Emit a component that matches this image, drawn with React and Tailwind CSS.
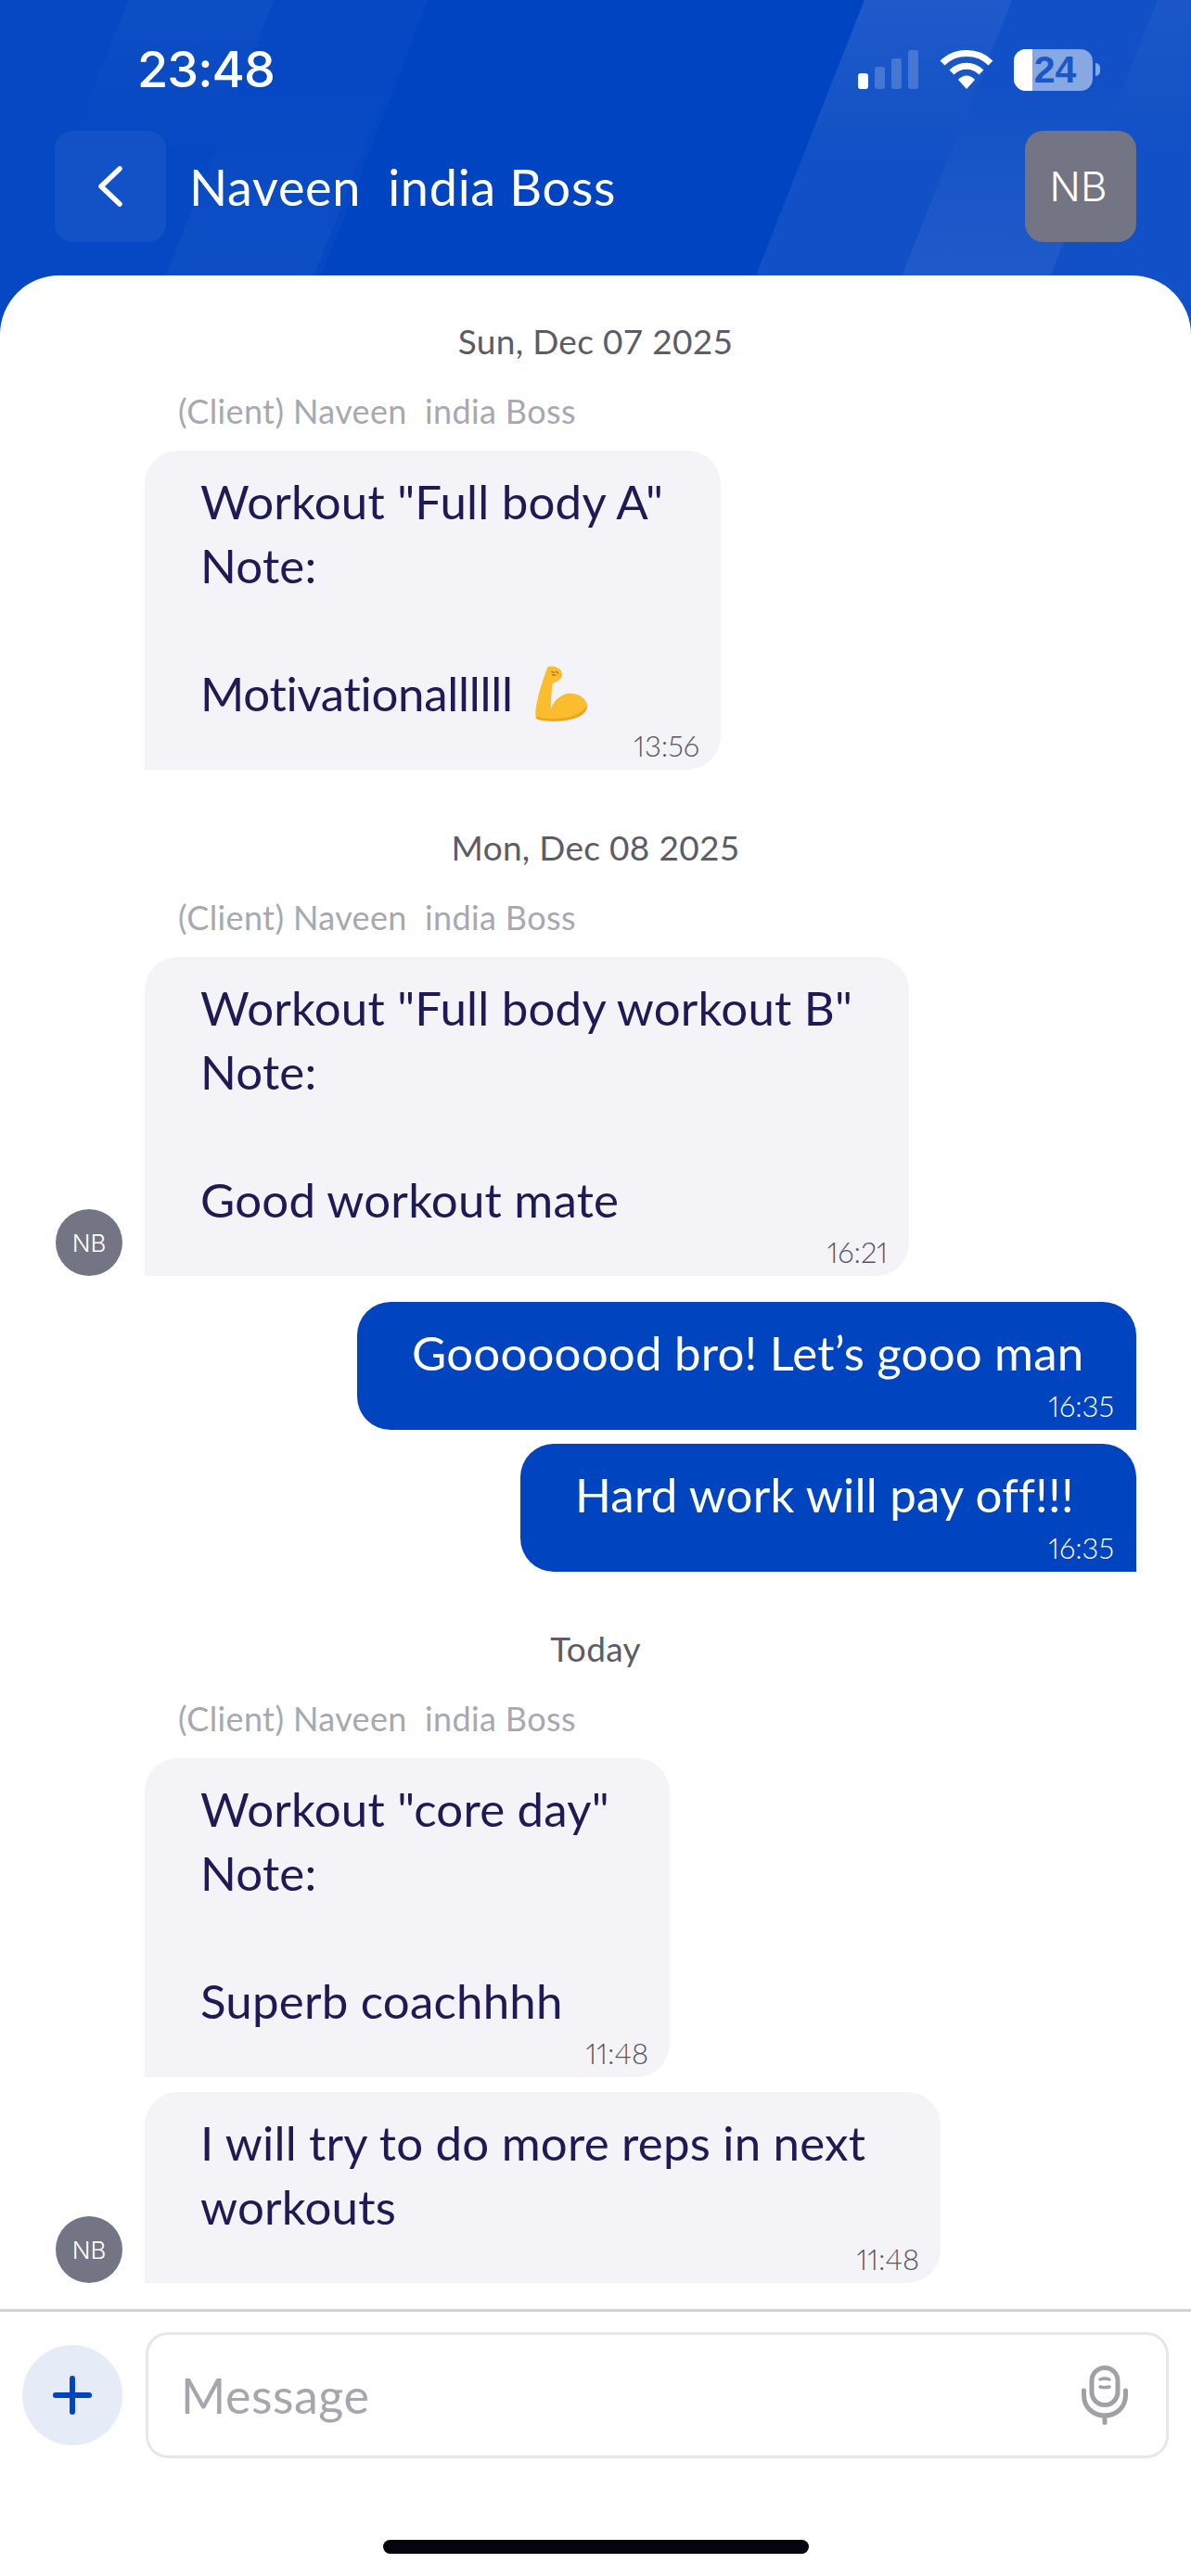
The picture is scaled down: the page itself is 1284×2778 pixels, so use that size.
import React from 'react';
import { Plus } from 'lucide-react';

const bodyFont = "font-['Lato','Noto_Sans',sans-serif]";

const DateLabel = ({ children, className }) => (
  <div className={`text-center text-[37px] tracking-[0.3px] leading-[40px] text-[#5c5c66] ${className}`}>{children}</div>
);

const SenderLabel = ({ className }) => (
  <div className={`pl-[192px] text-[36px] tracking-[0.37px] leading-[40px] text-[#a8a8b0] whitespace-pre ${className}`}>
    (Client) Naveen  india Boss
  </div>
);

const Avatar = () => (
  <div className="w-[72px] h-[72px] rounded-full bg-[#737585] flex items-center justify-center text-white text-[26px] font-light font-['Inter',sans-serif] shrink-0">
    NB
  </div>
);

const MuscleEmoji = () => (
  <svg viewBox="45 48 167 182" className="w-[56px] h-[61px] ml-[24px] shrink-0">
    <path
      d="M85 55C98 48 120 55 127 65C135 78 132 92 120 98C110 104 102 105 100 112C97 135 96 165 95 190C102 170 118 148 150 140C178 138 205 150 212 175C212 200 195 216 155 224C120 232 70 230 50 222C44 215 45 195 50 170C58 130 72 90 85 55Z"
      fill="#fbbc2d"
    />
    <path
      d="M48 214C80 224 125 224 160 214C185 207 203 195 212 178C212 200 195 216 155 224C120 232 70 230 50 222C47 220 47 217 48 214Z"
      fill="#f0a21f"
    />
    <path d="M98 70l8 3M112 70l6 4M100 80l10 1" stroke="#b8691a" strokeWidth="4" strokeLinecap="round" fill="none" />
  </svg>
);

const Received = ({ width, lines, time, avatar, className }) => (
  <div className={`flex items-end pl-[60px] gap-[24px] ${className}`}>
    {avatar ? <Avatar /> : <div className="w-[72px] shrink-0" />}
    <div className={`${width} bg-[#f3f3f8] rounded-[36px] rounded-bl-none pt-[20px] pl-[60px] text-[#1f1a55]`}>
      <div className="text-[51px] tracking-[0.2px] leading-[69px] whitespace-pre">
        {lines.map((l, i) =>
          l.startsWith('Motivational') ? (
            <div key={i} className="h-[69px] flex items-center tracking-[-0.3px]">
              {l}
              <MuscleEmoji />
            </div>
          ) : (
            <div key={i} className="h-[69px]">{l}</div>
          )
        )}
      </div>
      <div className="mt-[6px] mb-[10px] pr-[23px] text-right text-[31px] leading-[32px] font-light proportional-nums text-[#55555e]">{time}</div>
    </div>
  </div>
);

const Sent = ({ width, text, className }) => (
  <div className={`flex justify-end pr-[59px] ${className}`}>
    <div className={`${width} bg-[#0044c0] rounded-[36px] rounded-br-none pt-[20px] pl-[59px] text-white`}>
      <div className="text-[51px] tracking-[0.2px] leading-[69px] whitespace-pre">{text}</div>
      <div className="mt-[7px] mb-[10px] pr-[24px] text-right text-[31px] leading-[32px] font-light proportional-nums text-white">16:35</div>
    </div>
  </div>
);

const StatusIcons = () => (
  <div className="flex items-center">
    <svg viewBox="0 0 66 42" className="w-[66px] h-[42px]">
      <rect x="0" y="25" width="11" height="17" rx="3" fill="#fff" />
      <rect x="18" y="18" width="11" height="24" rx="3" fill="#fff" fillOpacity="0.2" />
      <rect x="36" y="9" width="11" height="33" rx="3" fill="#fff" fillOpacity="0.2" />
      <rect x="54" y="0" width="11" height="42" rx="3" fill="#fff" fillOpacity="0.2" />
    </svg>
    <svg viewBox="0 0 58 44" className="w-[58px] h-[44px] ml-[22px]">
      <path d="M3 15C17 1 41 1 55 15" stroke="#fff" strokeWidth="7" fill="none" />
      <path d="M13 25c9-9 23-9 32 0" stroke="#fff" strokeWidth="7" fill="none" />
      <path d="M20 33c5-6 13-6 18 0l-9 10z" fill="#fff" />
    </svg>
    <div className="relative ml-[22px] w-[85px] h-[45px] rounded-[13px] bg-white/50 overflow-hidden flex items-center justify-center">
      <div className="absolute left-0 top-0 bottom-0 w-[20px] bg-white" />
      <span className="relative pl-[4px] text-[41px] leading-none font-bold text-[#1a56cc] font-['Liberation_Sans',sans-serif]">24</span>
    </div>
    <div className="ml-[3px] w-[5px] h-[14px] rounded-r-full bg-white/50" />
  </div>
);

export default function App() {
  return (
    <div className={`relative w-[1284px] h-[2778px] overflow-hidden bg-[#0044c2] flex flex-col ${bodyFont}`}>
      <svg viewBox="0 0 1284 360" className="absolute left-0 top-0 w-[1284px] h-[360px]">
        <defs>
          <linearGradient id="fadeDown" x1="0" y1="0" x2="0" y2="1">
            <stop offset="0" stopColor="#fff" stopOpacity="1" />
            <stop offset="1" stopColor="#fff" stopOpacity="0" />
          </linearGradient>
          <linearGradient id="fadeUp" x1="0" y1="1" x2="0" y2="0">
            <stop offset="0.3" stopColor="#fff" stopOpacity="1" />
            <stop offset="1" stopColor="#fff" stopOpacity="0" />
          </linearGradient>
        </defs>
        {/* right side streaks */}
        <polygon points="932,0 1284,0 1284,360 790,360" fill="#fff" fillOpacity="0.065" />
        <polygon points="932,0 1091,0 1023,170 864,170" fill="url(#fadeDown)" fillOpacity="0.06" />
        <polygon points="1054,90 1213,90 1108,360 948,360" fill="url(#fadeUp)" fillOpacity="0.06" />
        <polygon points="1248,0 1284,0 1284,170 1180,170" fill="url(#fadeDown)" fillOpacity="0.04" />
        {/* left side streaks */}
        <polygon points="0,0 462,0 322,360 0,360" fill="#fff" fillOpacity="0.025" />
        <polygon points="138,0 295,0 229,170 72,170" fill="url(#fadeDown)" fillOpacity="0.03" />
        <polygon points="260,90 420,90 314,360 154,360" fill="url(#fadeUp)" fillOpacity="0.03" />
      </svg>

      <header className="relative h-[297px] shrink-0">
        <div className="h-[110px] pt-[40px] pl-[148px] pr-[98px] flex items-center justify-between">
          <span className="text-[54px] tracking-[-1px] font-medium text-white leading-none font-['Inter',sans-serif]">23:48</span>
          <StatusIcons />
        </div>
        <div className="mt-[31px] px-[59px] flex items-center">
          <div className="w-[120px] h-[120px] rounded-[20px] bg-white/5 flex items-center justify-center">
            <svg viewBox="0 0 26 44" className="w-[26px] h-[44px]" fill="none" stroke="#fff" strokeWidth="5.5" strokeLinecap="round" strokeLinejoin="round">
              <path d="M23 3L3 22l20 19" />
            </svg>
          </div>
          <div className="ml-[25px] flex-1 text-[54px] tracking-[0.7px] text-white whitespace-pre">Naveen  india Boss</div>
          <div className="w-[120px] h-[120px] rounded-[20px] bg-[#737585] flex items-center justify-center pr-[5px] text-white text-[44px] font-light font-['Inter',sans-serif]">
            NB
          </div>
        </div>
      </header>

      <main className="relative flex-1 bg-white rounded-t-[64px] flex flex-col">
        <DateLabel className="mt-[51px]">Sun, Dec 07 2025</DateLabel>
        <SenderLabel className="mt-[35px]" />
        <Received
          className="mt-[23px]"
          width="w-[621px]"
          lines={['Workout "Full body A"', 'Note:', ' ', 'Motivationallllll']}
          time="13:56"
        />
        <DateLabel className="mt-[64px]">Mon, Dec 08 2025</DateLabel>
        <SenderLabel className="mt-[35px]" />
        <Received
          className="mt-[23px]"
          avatar
          width="w-[824px]"
          lines={['Workout "Full body workout B"', 'Note:', ' ', 'Good workout mate']}
          time="16:21"
        />
        <Sent className="mt-[28px]" width="w-[840px]" text="Goooooood bro! Let’s gooo man" />
        <Sent className="mt-[15px]" width="w-[664px]" text="Hard work will pay off!!!" />
        <DateLabel className="mt-[63px]">Today</DateLabel>
        <SenderLabel className="mt-[35px]" />
        <Received
          className="mt-[23px]"
          width="w-[566px]"
          lines={['Workout "core day"', 'Note:', ' ', 'Superb coachhhh']}
          time="11:48"
        />
        <Received
          className="mt-[16px]"
          avatar
          width="w-[858px]"
          lines={['I will try to do more reps in next', 'workouts']}
          time="11:48"
        />

        <div className="mt-[28px] border-t-[3px] border-[#d2d2dc] flex items-start pt-[22px] pl-[24px] pr-[24px]">
          <div className="mt-[14px] w-[108px] h-[108px] rounded-full bg-[#e6ebf8] flex items-center justify-center shrink-0">
            <Plus size={62} color="#0044c2" strokeWidth={2.3} />
          </div>
          <div className="ml-[25px] flex-1 h-[136px] border-[3px] border-[#e6e6ec] rounded-[24px] flex items-center justify-between pl-[35px] pr-[41px]">
            <span className="text-[52px] tracking-[0.5px] text-[#a6a6ae]">Message</span>
            <svg viewBox="0 0 50 64" className="w-[50px] h-[64px]" fill="none" stroke="#a0a0a6" strokeWidth="5" strokeLinecap="round">
              <rect x="11" y="2.5" width="28" height="40" rx="14" />
              <path d="M2.5 27v5c0 13 10 22 22.5 22s22.5-9 22.5-22v-5" />
              <path d="M25 54v7.5" />
              <path d="M20 15q5-2 10 0M20 23q5 1.5 10 0" strokeWidth="3.5" />
            </svg>
          </div>
        </div>

        <div className="absolute left-[413px] bottom-[24px] w-[459px] h-[15px] rounded-full bg-[#050510]" />
      </main>
    </div>
  );
}
